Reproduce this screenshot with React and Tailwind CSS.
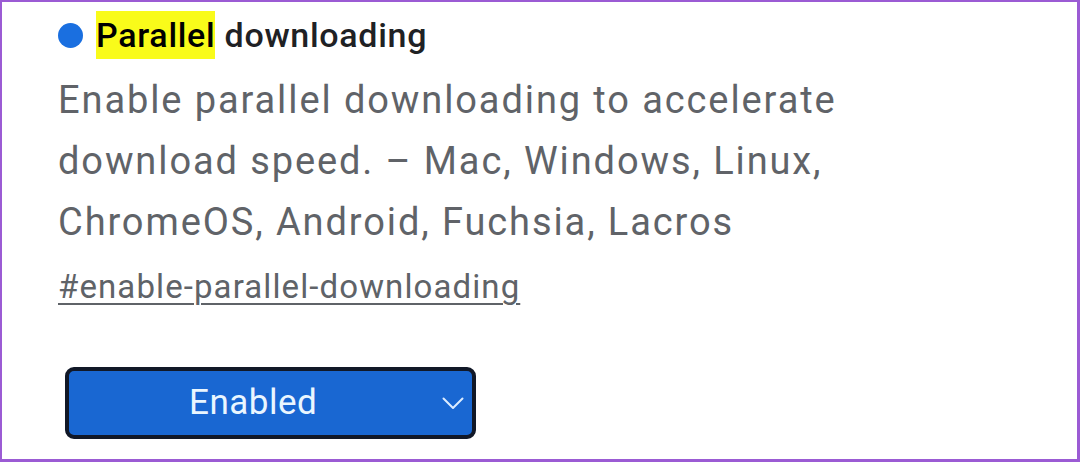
const Chevron = () => (
  <svg width="22" height="13" viewBox="0 0 22 13" fill="none" className="shrink-0">
    <path d="M1.5 1.5 L11 11 L20.5 1.5" stroke="#dcecff" strokeWidth="2" strokeLinecap="round" strokeLinejoin="round" />
  </svg>
);

export default function App() {
  return (
    <div
      className="w-[1080px] h-[462px] bg-white border-t-2 border-l-2 border-r-[3px] border-b-[3px] border-[#9b5bd4] overflow-hidden"
      style={{ fontFamily: "Roboto, 'Noto Sans', sans-serif" }}
    >
      <div className="pl-[56px] pt-[12px]">
        <div className="flex items-center h-[42px]">
          <span className="w-[25px] h-[25px] rounded-full bg-[#1a6fe0] mr-[13px] shrink-0" />
          <h1 className="text-[34px] font-medium text-[#202124] leading-[42px] tracking-[0.7px]">
            <span className="bg-[#f9fb1a] text-black py-[4px]">Parallel</span> downloading
          </h1>
        </div>
        <p className="mt-[14px] text-[38px] leading-[61px] text-[#606368] tracking-[1.9px] w-[860px]">
          Enable parallel downloading to accelerate download speed. – Mac, Windows, Linux, ChromeOS, Android, Fuchsia, Lacros
        </p>
        <a href="#" className="block mt-[14px] text-[33px] leading-[40px] text-[#5f6368] tracking-[1.1px] underline decoration-[2px] underline-offset-[5px]">
          #enable-parallel-downloading
        </a>
        <button className="mt-[60px] ml-[7px] w-[411px] h-[72px] rounded-[9px] border-[4px] border-[#111827] bg-[#1967d2] flex items-center pl-[120px] pr-[8px]">
          <span className="text-[35px] text-[#eaf6ff] tracking-[0.5px]">Enabled</span>
          <span className="ml-auto">
            <Chevron />
          </span>
        </button>
      </div>
    </div>
  );
}
